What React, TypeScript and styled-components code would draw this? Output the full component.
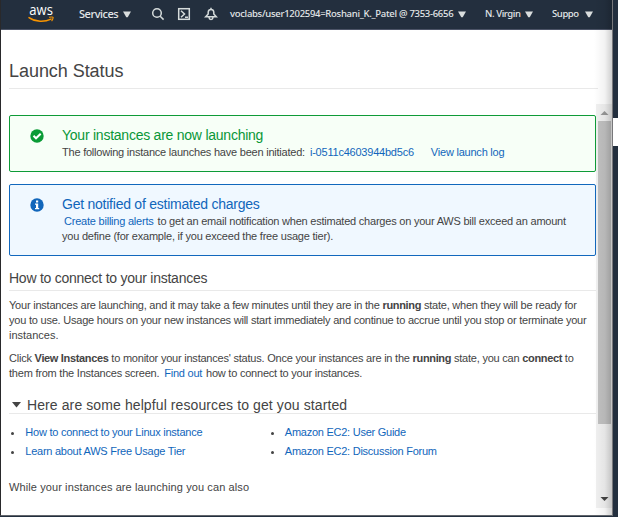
import React from "react";
import styled, { createGlobalStyle } from "styled-components";

const GlobalStyle = createGlobalStyle`
  html, body { margin: 0; padding: 0; overflow: hidden; }
  * { box-sizing: border-box; }
  body { font-family: "Liberation Sans", Arial, sans-serif; color: #444; background: #232f3e; }
`;

const Desktop = styled.div`
  display: flex;
  width: 618px;
  height: 517px;
  background: #232f3e;
`;

const Window = styled.main`
  position: relative;
  display: flex;
  flex-direction: column;
  width: 613px;
  height: 516px;
  border-left: 1px solid #29292b;
  border-right: 1px solid #77777a;
  border-bottom: 1px solid #62666c;
  background: #fff;
`;

const EdgeShade = styled.div`
  position: absolute;
  top: 0;
  right: 0;
  bottom: 0;
  width: 18px;
  background: linear-gradient(to right, rgba(0, 0, 0, 0), rgba(0, 0, 0, 0.05) 60%, rgba(0, 0, 0, 0.19));
  pointer-events: none;
`;

const Strip = styled.div`
  width: 5px;
  padding-top: 118px;
`;

const StripGap = styled.div`
  height: 28px;
  background: #fff;
`;

const Header = styled.header`
  display: flex;
  align-items: flex-start;
  flex: none;
  height: 30px;
  background: #232f3e;
  border-bottom: 1px solid #4c5467;
  color: #e4e7e8;
`;

const Logo = styled.svg`
  flex: none;
  width: 28px;
  height: 18px;
  margin: 5px 0 0 27px;
  overflow: visible;
`;

const NavLabel = styled.span<{ $gap: number; $width: number; $size: number; $ls?: number }>`
  flex: none;
  margin-left: ${(p) => p.$gap}px;
  width: ${(p) => p.$width}px;
  font: 500 ${(p) => p.$size}px/28px "Noto Sans", sans-serif;
  letter-spacing: ${(p) => p.$ls ?? 0}px;
  white-space: nowrap;
`;

const Caret = styled.svg`
  flex: none;
  width: 8px;
  height: 7px;
  margin-top: 11px;
  fill: #d9dddd;
`;

const NavIcon = styled.svg<{ $gap: number }>`
  flex: none;
  width: 14px;
  height: 14px;
  margin: 7px 0 0 ${(p) => p.$gap}px;
  fill: none;
  stroke: #d5dbdb;
  stroke-width: 1.5;
`;

const TitleBar = styled.div`
  flex: none;
  width: 589px;
  height: 59px;
  margin-left: 8px;
  padding-top: 30px;
  border-bottom: 1px solid #e9e9e9;
`;

const PageTitle = styled.h1`
  margin: 0;
  font-size: 18px;
  line-height: 22px;
  font-weight: 400;
  letter-spacing: -0.05px;
`;

const Scroller = styled.div`
  display: flex;
  flex: none;
  height: 404px;
  margin-top: 15px;
`;

const Content = styled.div`
  width: 595px;
  padding: 11px 0 0 8px;
`;

const Alert = styled.section<{ $line: string; $fill: string; $height: number; $after: number }>`
  display: flex;
  width: 587px;
  height: ${(p) => p.$height}px;
  margin-bottom: ${(p) => p.$after}px;
  padding: 11px 0 0 20px;
  border: 1px solid ${(p) => p.$line};
  border-radius: 2px;
  background: ${(p) => p.$fill};
`;

const AlertIcon = styled.svg`
  flex: none;
  width: 14px;
  height: 14px;
  margin: 2px 18px 0 0;
`;

const AlertTitle = styled.h2<{ $color: string }>`
  margin: 0;
  font-size: 14px;
  line-height: 16px;
  font-weight: 400;
  letter-spacing: -0.24px;
  color: ${(p) => p.$color};
`;

const Line = styled.div<{ $ls?: number; $top?: number; $indent?: number }>`
  margin-top: ${(p) => p.$top ?? 0}px;
  padding-left: ${(p) => p.$indent ?? 0}px;
  font-size: 11px;
  line-height: 15px;
  letter-spacing: ${(p) => p.$ls ?? -0.22}px;
  white-space: nowrap;

  b {
    letter-spacing: -0.34px;
  }
`;

const Link = styled.a<{ $left?: number; $right?: number }>`
  margin: 0 ${(p) => p.$right ?? 0}px 0 ${(p) => p.$left ?? 0}px;
  color: #1166bb;
`;

const SectionTitle = styled.h3<{ $ls: number; $height: number; $top?: number }>`
  display: flex;
  align-items: flex-start;
  width: 587px;
  height: ${(p) => p.$height}px;
  margin: 0;
  padding-top: ${(p) => p.$top ?? 0}px;
  border-bottom: 1px solid #e9e9e9;
  font-size: 14px;
  line-height: 16px;
  font-weight: 400;
  letter-spacing: ${(p) => p.$ls}px;
`;

const Toggle = styled.svg`
  width: 9px;
  height: 6px;
  margin: 5px 6px 0 3px;
  fill: #444;
`;

const Resources = styled.div`
  display: grid;
  grid-template-columns: 259.5px 1fr;
  row-gap: 4px;
  margin-top: 11px;
`;

const Resource = styled.div`
  display: flex;
  align-items: center;
  gap: 11.3px;
  padding-left: 2px;
`;

const Bullet = styled.span`
  width: 3px;
  height: 3px;
  margin-top: 2px;
  border-radius: 50%;
  background: #444;
`;

const Scrollbar = styled.div`
  display: flex;
  flex-direction: column;
  align-items: center;
  width: 16px;
  height: 404px;
  background: #f1f1f1;
`;

const ScrollArrow = styled.svg<{ $color: string }>`
  flex: none;
  width: 16px;
  height: 17px;
  fill: ${(p) => p.$color};
`;

const Track = styled.div`
  flex: 1;
`;

const Thumb = styled.div`
  width: 13px;
  height: 303px;
  background: #c1c1c1;
`;

const Down = () => (
  <Caret viewBox="0 0 8 7">
    <path d="M0 .5h8L4.7 6.3h-1.4z" />
  </Caret>
);

export default function App() {
  return (
    <>
      <GlobalStyle />
      <Desktop>
        <Window>
          <Header>
            <Logo viewBox="0 0 28 18">
              <text x="1.3" y="10.2" fontFamily="Open Sans, sans-serif" fontSize="14" fontWeight="500" fill="#fff" textLength="23.6" lengthAdjust="spacingAndGlyphs">aws</text>
              <path d="M1 12.6c6.500 4.500 15.500 4.600 22 1.500" fill="none" stroke="#f79400" strokeWidth="1.500" strokeLinecap="round" />
              <path d="M21 12.300c3-.6 4.500-.3 4.100.6-.2 1.400-.7 2.300-1.500 3.200" fill="none" stroke="#f79400" strokeWidth="1.100" />
            </Logo>
            <NavLabel $gap={23} $width={44} $size={11} $ls={-0.45}>Services</NavLabel>
            <Down />
            <NavIcon $gap={20} viewBox="0 0 14 14">
              <circle cx="6" cy="6" r="4.300" />
              <path d="M9.200 9.200l3.400 3.400" />
            </NavIcon>
            <NavIcon $gap={12} viewBox="0 0 14 14">
              <rect x="1.700" y="1.700" width="10.600" height="10.600" />
              <path d="M4 3.700l3.500 3.300L4 10.300M8 10.200h3" />
            </NavIcon>
            <NavIcon $gap={13} viewBox="0 0 14 14">
              <path d="M1.700 9.700L4.200 7V5C4.400 3.200 5.300 2.400 7 2.400s2.600.8 2.800 2.600v2l2.500 2.700zM7 .8v1.600M5 10.500c.2 2.500 3.800 2.500 4 0" />
            </NavIcon>
            <NavLabel $gap={12} $width={228} $size={9.5} $ls={-0.29}>voclabs/user1202594=Roshani_K._Patel @ 7353-6656</NavLabel>
            <Down />
            <NavLabel $gap={19} $width={40} $size={9.5} $ls={-0.4}>N. Virgin</NavLabel>
            <Down />
            <NavLabel $gap={19} $width={33} $size={9.5} $ls={-0.4}>Suppo</NavLabel>
            <Down />
          </Header>
          <TitleBar>
            <PageTitle>Launch Status</PageTitle>
          </TitleBar>
          <Scroller>
            <Content>
              <Alert $line="#0e9b37" $fill="#f7fff7" $height={57} $after={12}>
                <AlertIcon viewBox="0 0 14 14">
                  <circle cx="7" cy="7" r="6.700" fill="#0a9b36" />
                  <path d="M3.500 6.800l2.500 2.500 4.700-4.600" fill="none" stroke="#fff" strokeWidth="2" />
                </AlertIcon>
                <div>
                  <AlertTitle $color="#099737">Your instances are now launching</AlertTitle>
                  <Line $top={2}>
                    The following instance launches have been initiated:
                    <Link $left={5} $right={17}>i-0511c4603944bd5c6</Link>
                    <Link>View launch log</Link>
                  </Line>
                </div>
              </Alert>
              <Alert $line="#1268bd" $fill="#f0f8ff" $height={72} $after={14}>
                <AlertIcon viewBox="0 0 14 14">
                  <circle cx="7" cy="7" r="6.700" fill="#1166bb" />
                  <path d="M6 2.500h2.200v2H6zM5 5.500h3.200v4.500h1v1.300H5V10h1V6.800H5z" fill="#fff" />
                </AlertIcon>
                <div>
                  <AlertTitle $color="#1166bb">Get notified of estimated charges</AlertTitle>
                  <Line $top={2} $indent={2}>
                    <Link $right={4}>Create billing alerts</Link>
                    to get an email notification when estimated charges on your AWS bill exceed an amount
                  </Line>
                  <Line>you define (for example, if you exceed the free usage tier).</Line>
                </div>
              </Alert>
              <SectionTitle $ls={-0.25} $height={21}>How to connect to your instances</SectionTitle>
              <Line $top={7}>Your instances are launching, and it may take a few minutes until they are in the <b>running</b> state, when they will be ready for</Line>
              <Line>you to use. Usage hours on your new instances will start immediately and continue to accrue until you stop or terminate your</Line>
              <Line $ls={0}>instances.</Line>
              <Line $top={8}>Click <b>View Instances</b> to monitor your instances' status. Once your instances are in the <b>running</b> state, you can <b>connect</b> to</Line>
              <Line>them from the Instances screen. <Link $left={2} $right={1}>Find out</Link> how to connect to your instances.</Line>
              <SectionTitle as="h2" $ls={0.1} $height={33} $top={16}>
                <Toggle viewBox="0 0 9 6"><path d="M0 0h9L4.500 5.500z" /></Toggle>
                Here are some helpful resources to get you started
              </SectionTitle>
              <Resources>
                <Resource><Bullet /><Line $ls={-0.24}><Link>How to connect to your Linux instance</Link></Line></Resource>
                <Resource><Bullet /><Line $ls={-0.25}><Link>Amazon EC2: User Guide</Link></Line></Resource>
                <Resource><Bullet /><Line $ls={-0.25}><Link>Learn about AWS Free Usage Tier</Link></Line></Resource>
                <Resource><Bullet /><Line $ls={-0.25}><Link>Amazon EC2: Discussion Forum</Link></Line></Resource>
              </Resources>
              <Line $top={21} $ls={0.1}>While your instances are launching you can also</Line>
            </Content>
            <Scrollbar>
              <ScrollArrow $color="#999" viewBox="0 0 16 17"><path d="M4.500 11L8.500 7l4 4z" /></ScrollArrow>
              <Track><Thumb /></Track>
              <ScrollArrow $color="#444" viewBox="0 0 16 17"><path d="M4.500 6h8l-4 4z" /></ScrollArrow>
            </Scrollbar>
          </Scroller>
          <EdgeShade />
        </Window>
        <Strip><StripGap /></Strip>
      </Desktop>
    </>
  );
}
